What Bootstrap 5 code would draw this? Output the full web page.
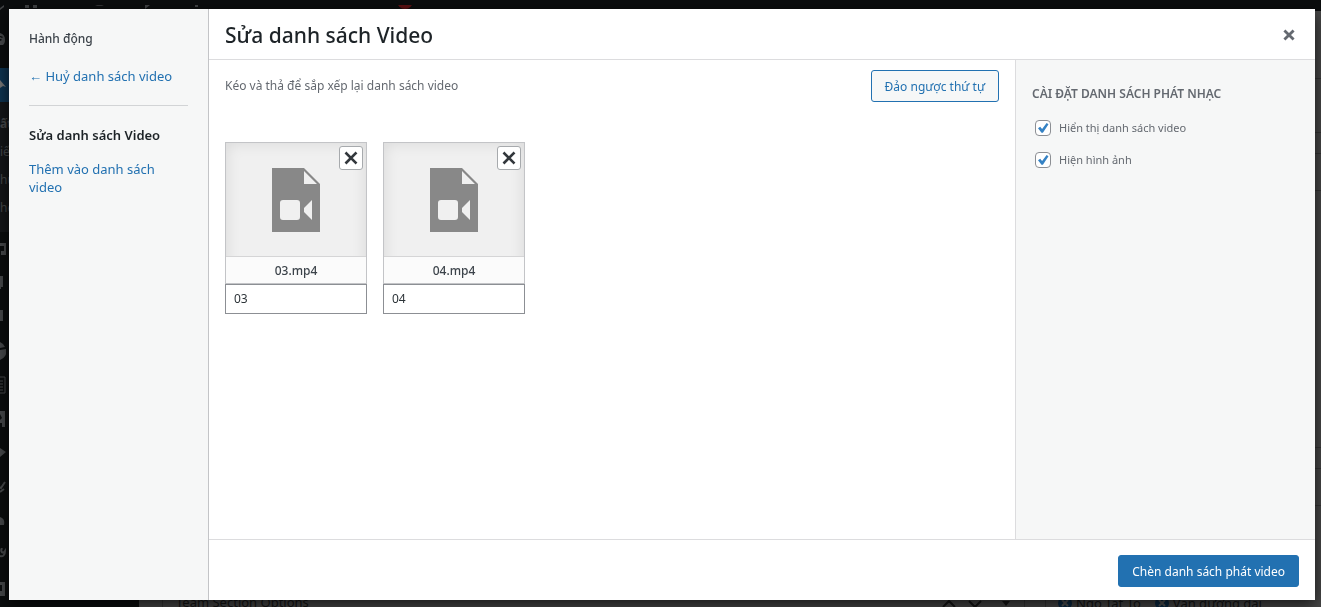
<!DOCTYPE html>
<html lang="vi">
<head>
<meta charset="utf-8">
<meta name="viewport" content="width=device-width, initial-scale=1">
<title>Sửa danh sách Video</title>
<link rel="stylesheet" href="https://cdn.jsdelivr.net/npm/bootstrap@5.3.0/dist/css/bootstrap.min.css">
<style>
  body { font-family: "Noto Sans", "Open Sans", sans-serif; font-size: 12px; line-height: 18px; color: #3c434a; background: #484848; }
  a { color: #2271b1; text-decoration: none; }

  /* dimmed admin page behind the dialog */
  .admin-bar { height: 11px; background: #0b0d0e; color: #414345; }
  .admin-bar svg { height: 10px; }
  .admin-menu { width: 139px; background: #0b0d0e; color: #46484a; }
  .admin-menu ul { width: 9px; }
  .admin-menu .item { height: 34px; }
  .admin-menu .home { height: 57px; }
  .admin-menu .current { background: #0e3350; color: #777; }
  .admin-menu .sub-items { background: #141618; height: 130px; padding-top: 8px; font-size: 12px; }
  .admin-menu .sub-items li { height: 28px; line-height: 28px; }
  .panels div { border-bottom: 1px solid #363636; }
  .panels .gap-tall { height: 68px; }
  .panels .gap-head { height: 54px; }
  .panels .bar-low { height: 21px; }
  .panels .bar-mid { height: 37px; }
  .panels .box-body { height: 257px; }
  .page-foot { color: #161616; font-size: 13px; line-height: 16px; margin-bottom: -5px; }
  .foot-main { margin-left: 23px; padding-left: 13px; border-left: 1px solid #363636; }
  .foot-side { width: 276px; border-left: 1px solid #363636; padding-left: 12px; margin-left: 20px; gap: 14px; }
  .foot-tools { border-right: 1px solid #363636; padding-right: 12px; }

  /* dialog */
  .media-window { z-index: 10; inset: 9px 6px 7px 9px; background: #fff; box-shadow: 0 5px 15px rgba(0,0,0,.7); }
  .frame-menu { width: 200px; padding: 20px; background: #f6f7f7; border-right: 1px solid #c3c4c7; font-size: 13px; }
  .frame-menu h2 { font-size: 12px; line-height: 20px; font-weight: 500; margin: 0 0 18px; }
  .frame-menu hr { margin: 20px 0; border-color: #c3c4c7; opacity: .7; }
  .frame-menu a, .frame-menu strong { margin-bottom: 16px; }
  .frame-menu strong { font-weight: 600; color: #1d2327; font-size: 13px; }
  .frame-title { height: 51px; border-bottom: 1px solid #dcdcde; padding: 2px 16px 0; }
  .frame-title h1 { font-size: 21px; line-height: 48px; font-weight: 500; color: #1d2327; }
  .close-btn { color: #646970; }
  .frame-body { padding: 10px 16px; }
  .hint { color: #646970; line-height: 32px; }
  .wp-btn { height: 32px; padding: 0 13px; font-size: 12px; line-height: 32px; border-radius: 3px; }
  .wp-btn-outline { color: #2271b1; border-color: #2271b1; background: #f6f7f7; }
  .wp-btn-main { color: #fff; background: #2271b1; border-color: #2271b1; }
  .clips { margin-top: 40px; gap: 16px; }
  .clip { width: 142px; }
  .thumb { height: 142px; background: #f0f0f0; border: 1px solid #c3c4c7; box-shadow: inset 0 0 15px rgba(0,0,0,.1); }
  .thumb .art { height: 113px; }
  .file-name { height: 27px; line-height: 27px; border-top: 1px solid #d5d5d6; background: #fbfbfb; font-weight: 500; }
  .clip input { height: 30px; padding: 0 8px 2px; font-size: 12px; line-height: 26px; border: 1px solid #8c8f94; border-radius: 0; color: #2c3338; }
  .remove { top: 3px; right: 3px; width: 24px; height: 24px; border: 1px solid #a7aaad; border-radius: 3px; background: #fff; color: #32373c; }
  .frame-side { width: 300px; padding: 25px 16px; background: #f6f7f7; border-left: 1px solid #dcdcde; color: #646970; }
  .frame-side h2 { font-size: 12px; line-height: 18px; font-weight: 600; margin: 0 0 16px; }
  .setting { gap: 8px; margin: 0 3px 14px; font-size: 11px; }
  .setting input { appearance: none; width: 16px; height: 16px; margin: 0; border: 1px solid #8c8f94; border-radius: 4px; background: #fff; }
  .setting input:checked { background: #fff url("data:image/svg+xml,%3Csvg xmlns='http://www.w3.org/2000/svg' viewBox='0 0 14 14'%3E%3Cpath d='M2 7.2 4.2 5.7 6.1 8 10.6 2.1 12.5 3.2 6.9 11.8H5.5z' fill='%233582c4'/%3E%3C/svg%3E") center / 14px no-repeat; }
  .frame-foot { height: 61px; padding: 2px 16px 0; border-top: 1px solid #dcdcde; }
</style>
</head>
<body>
<svg class="d-none">
  <symbol id="cross" viewBox="0 0 12 12"><path d="M2.4 2.4l7.2 7.2M9.6 2.4l-7.2 7.2" fill="none" stroke="currentColor" stroke-width="2.8" stroke-linecap="square"/></symbol>
  <symbol id="cross-thin" viewBox="0 0 14 14"><path d="M2.4 2.4l9.2 9.2M11.6 2.4l-9.2 9.2" fill="none" stroke="currentColor" stroke-width="2.6" stroke-linecap="square"/></symbol>
  <symbol id="video-file" viewBox="0 0 48 64"><path fill="#888" fill-rule="evenodd" d="M0 0h32l16 16v48H0zM32 3v13h13zM11 32a3 3 0 0 0-3 3v14a3 3 0 0 0 3 3h14a3 3 0 0 0 3-3V35a3 3 0 0 0-3-3zM40 32l-8 8v4l8 8z"/></symbol>
  <symbol id="tag-off" viewBox="0 0 14 14"><circle cx="7" cy="7" r="7" fill="#0b2a44"/><path d="M4 4l6 6M10 4l-6 6" stroke="#555" stroke-width="2"/></symbol>
</svg>

<div class="vh-100 d-flex flex-column overflow-hidden">
  <div class="admin-bar w-100 flex-shrink-0 overflow-hidden">
    <svg width="420" viewBox="0 0 420 10" fill="currentColor"><path d="M0 3l4-3v2L0 5zM25 0h12v3h-4V0h-4v3h-4zM95 0a6 2 0 0 0 9 0zM145 0h5l-5 4zM195 0h3v2h-3z"/><circle cx="405" cy="-4" r="8" fill="#5c1113"/></svg>
  </div>
  <div class="d-flex flex-grow-1">
    <nav class="admin-menu flex-shrink-0" aria-label="Menu">
      <ul class="list-unstyled m-0 overflow-hidden">
        <li class="home d-flex align-items-center"><svg width="6" height="14" viewBox="0 0 6 14" fill="currentColor"><path d="M0 0a7 7 0 0 1 5 7c0 3-1 4-2 5H0V8l2-1-1-1H0V4l2 1 1-1-2-1-1 0z"/></svg></li>
        <li class="item current d-flex align-items-center"><svg width="6" height="14" viewBox="0 0 6 14" fill="currentColor"><path d="M0 2l6 7-3-1-3 2z"/></svg></li>
        <li><ul class="sub-items list-unstyled"><li class="fw-bold">ất</li><li>iế</li><li>hu</li><li>hé</li></ul></li>
        <li class="item d-flex align-items-center"><svg width="6" height="14" viewBox="0 0 6 14" fill="currentColor"><path d="M0 1h6v12H1V9h3V4H0z"/></svg></li>
        <li class="item d-flex align-items-center"><svg width="4" height="14" viewBox="0 0 4 14" fill="currentColor"><path d="M0 0h3v11H1v2H0z"/></svg></li>
        <li class="item d-flex align-items-center"><svg width="4" height="14" viewBox="0 0 4 14" fill="currentColor"><path d="M0 0h3v11H0z"/></svg></li>
        <li class="item d-flex align-items-center"><svg width="6" height="18" viewBox="0 0 6 18" fill="currentColor"><path d="M0 0a9 9 0 0 1 5 5l-5 1zM0 8l6-1a9 9 0 0 1-6 11z"/></svg></li>
        <li class="item d-flex align-items-center"><svg width="6" height="18" viewBox="0 0 6 18" fill="none" stroke="currentColor"><path d="M0 1h5v16H0M0 5h3M0 8h3M0 11h3M0 14h3"/></svg></li>
        <li class="item d-flex align-items-center"><svg width="6" height="16" viewBox="0 0 6 16" fill="currentColor"><path d="M0 0h5v16H2v-4H0V9l2-2-2-4z"/></svg></li>
        <li class="item d-flex align-items-center"><svg width="6" height="16" viewBox="0 0 6 16" fill="currentColor"><path d="M0 3l6 4-6 5z"/></svg></li>
        <li class="item d-flex align-items-center"><svg width="6" height="14" viewBox="0 0 6 14" fill="none" stroke="currentColor" stroke-width="2"><path d="M0 7l1 1 4-6M0 12l4-3"/></svg></li>
        <li class="item d-flex align-items-center"><svg width="5" height="8" viewBox="0 0 5 8" fill="currentColor"><path d="M0 0c3 1 5 3 4 8H0z"/></svg></li>
        <li class="item d-flex align-items-center"><svg width="6" height="14" viewBox="0 0 6 14" fill="none" stroke="currentColor" stroke-width="2"><path d="M2 0c-2 4 1 6 3 3 0 4-2 6-5 5"/></svg></li>
        <li class="item d-flex align-items-center"><svg width="6" height="14" viewBox="0 0 6 14" fill="currentColor"><path d="M0 0h5v14H0V9h2V3H0z"/></svg></li>
      </ul>
    </nav>
    <div class="flex-grow-1 d-flex flex-column justify-content-between">
      <div class="panels">
        <div class="gap-tall"></div><div class="gap-head"></div><div class="bar-low"></div><div class="bar-mid"></div>
        <div class="box-body"></div><div class="bar-low"></div><div class="bar-mid"></div>
      </div>
      <div class="page-foot d-flex">
        <div class="foot-main flex-grow-1">Team Section Options</div>
        <div class="foot-tools"><svg width="70" height="16" viewBox="0 0 70 16" fill="none" stroke="currentColor" stroke-width="2"><path d="M1 11l6-6 6 6M27 5l6 6 6-6"/><path d="M60 5h8l-4 5z" fill="currentColor" stroke="none"/></svg></div>
        <div class="foot-side d-flex">
          <span class="d-flex align-items-center gap-1"><svg width="14" height="14"><use href="#tag-off"/></svg>Ngô Tất Tố</span>
          <span class="d-flex align-items-center gap-1"><svg width="14" height="14"><use href="#tag-off"/></svg>Văn đương đại</span>
        </div>
      </div>
    </div>
  </div>
</div>

<div class="media-window position-fixed d-flex" role="dialog" aria-labelledby="frame-heading">
  <nav class="frame-menu flex-shrink-0" aria-label="Hành động">
    <h2>Hành động</h2>
    <a href="#" class="d-block">← Huỷ danh sách video</a>
    <hr>
    <strong class="d-block">Sửa danh sách Video</strong>
    <a href="#" class="d-block">Thêm vào danh sách video</a>
  </nav>
  <div class="flex-grow-1 d-flex flex-column">
    <header class="frame-title d-flex justify-content-between align-items-center flex-shrink-0">
      <h1 class="m-0" id="frame-heading">Sửa danh sách Video</h1>
      <button type="button" class="close-btn btn border-0 p-1 d-flex" aria-label="Đóng"><svg width="12" height="12"><use href="#cross"/></svg></button>
    </header>
    <div class="d-flex flex-grow-1">
      <main class="frame-body flex-grow-1">
        <div class="d-flex justify-content-between">
          <span class="hint">Kéo và thả để sắp xếp lại danh sách video</span>
          <button type="button" class="btn wp-btn wp-btn-outline">Đảo ngược thứ tự</button>
        </div>
        <ul class="clips list-unstyled d-flex flex-wrap">
          <li class="clip">
            <div class="thumb position-relative">
              <div class="art d-flex justify-content-center align-items-center"><svg width="48" height="64"><use href="#video-file"/></svg></div>
              <div class="file-name text-center">03.mp4</div>
              <button type="button" class="remove btn p-0 position-absolute d-flex justify-content-center align-items-center" aria-label="Xoá 03.mp4"><svg width="14" height="14"><use href="#cross-thin"/></svg></button>
            </div>
            <input type="text" class="form-control" value="03" aria-label="Tiêu đề 03">
          </li>
          <li class="clip">
            <div class="thumb position-relative">
              <div class="art d-flex justify-content-center align-items-center"><svg width="48" height="64"><use href="#video-file"/></svg></div>
              <div class="file-name text-center">04.mp4</div>
              <button type="button" class="remove btn p-0 position-absolute d-flex justify-content-center align-items-center" aria-label="Xoá 04.mp4"><svg width="14" height="14"><use href="#cross-thin"/></svg></button>
            </div>
            <input type="text" class="form-control" value="04" aria-label="Tiêu đề 04">
          </li>
        </ul>
      </main>
      <aside class="frame-side flex-shrink-0">
        <h2>CÀI ĐẶT DANH SÁCH PHÁT NHẠC</h2>
        <div class="setting d-flex align-items-center"><input type="checkbox" id="show-list" checked><label for="show-list">Hiển thị danh sách video</label></div>
        <div class="setting d-flex align-items-center"><input type="checkbox" id="show-images" checked><label for="show-images">Hiện hình ảnh</label></div>
      </aside>
    </div>
    <footer class="frame-foot d-flex justify-content-end align-items-center flex-shrink-0">
      <button type="button" class="btn wp-btn wp-btn-main">Chèn danh sách phát video</button>
    </footer>
  </div>
</div>
<script src="https://cdn.jsdelivr.net/npm/bootstrap@5.3.0/dist/js/bootstrap.bundle.min.js"></script>
</body>
</html>
